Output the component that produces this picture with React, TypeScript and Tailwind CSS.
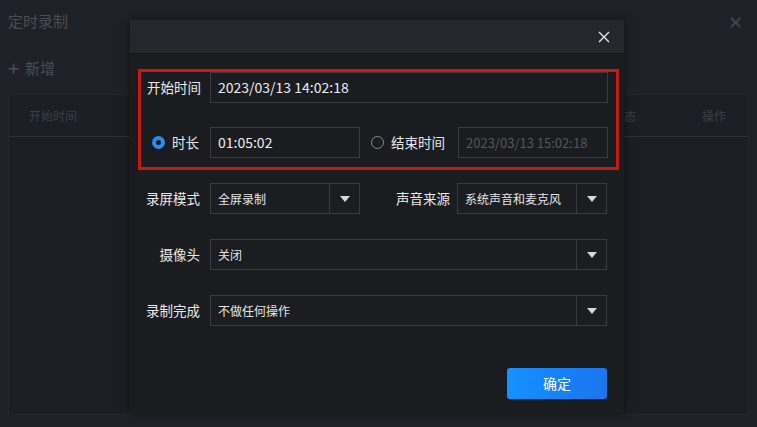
import React from 'react';

const font = { fontFamily: '"Noto Sans CJK SC", "Noto Sans", sans-serif' };

const Caret = () => (
  <svg width="10" height="6" viewBox="0 0 10 6">
    <path d="M0 0 L10 0 L5 6 Z" fill="#d8d8d8" />
  </svg>
);

const Select = ({ value, className }: { value: string; className: string }) => (
  <div className={`flex h-[31px] border border-[#3a3b41] bg-[#1c1d21] ${className}`}>
    <div className="flex flex-1 items-center pl-[7px] text-[12px] text-[#e4e4e4]">{value}</div>
    <div className="flex w-[30px] items-center justify-center border-l border-[#3a3b41]">
      <Caret />
    </div>
  </div>
);

const Radio = ({ on }: { on?: boolean }) =>
  on ? (
    <span className="flex h-[13px] w-[13px] items-center justify-center rounded-full bg-[#2d8cf0]">
      <span className="h-[5px] w-[5px] rounded-full bg-[#1b1c20]" />
    </span>
  ) : (
    <span className="h-[13px] w-[13px] rounded-full border border-[#8a8b90]" />
  );

const App = () => {
  return (
    <div className="relative h-[427px] w-[757px] overflow-hidden bg-[#1f2128]" style={font}>
      {/* background window */}
      <div className="flex h-[415px] flex-col px-[8px]">
        <div className="flex h-[42px] items-center justify-between">
          <span className="text-[15px] text-[#4b4d55]">定时录制</span>
          <span className="mr-[6px] text-[18px] text-[#44464e]">✕</span>
        </div>
        <div className="flex h-[52px] items-center gap-[6px] text-[15px] text-[#4b4d55]">
          <span className="text-[20px] leading-none">+</span>
          <span>新增</span>
        </div>
        <div className="flex-1 border border-[#25272e] bg-[#1c1e25]">
          <div className="flex h-[42px] items-center border-b border-[#2e3038] text-[12px] text-[#3c3e46]">
            <span className="ml-[20px]">开始时间</span>
            <span className="ml-auto mr-[66px]">状态</span>
            <span className="mr-[22px]">操作</span>
          </div>
        </div>
      </div>

      {/* dialog */}
      <div className="absolute left-[130px] top-[20px] flex h-[393px] w-[494px] flex-col bg-[#1b1c20] shadow-[0_0_8px_rgba(0,0,0,0.5)]">
        <div className="flex h-[34px] items-center justify-end border-b border-[#141518] bg-[#26272d] pr-[14px]">
          <svg width="12" height="12" viewBox="0 0 12 12">
            <path d="M1 1 L11 11 M11 1 L1 11" stroke="#e6e6e6" strokeWidth="1.4" />
          </svg>
        </div>

        <div className="flex flex-1 flex-col pl-[8px] pt-[15px]">
          <div className="mr-[5px] flex h-[101px] flex-col justify-between border-[3px] border-[#c01c14] pr-[8px]">
            <div className="flex items-center">
              <span className="w-[69px] pl-[6px] text-[13.5px] text-[#e8e8e8]">开始时间</span>
              <div className="flex h-[31px] flex-1 items-center border border-[#3a3b41] pl-[7px] text-[14px] text-[#ececec]">
                2023/03/13 14:02:18
              </div>
            </div>
            <div className="mb-[9px] flex items-center">
              <div className="flex w-[69px] items-center gap-[7px] pl-[11px]">
                <Radio on />
                <span className="text-[13.5px] text-[#e8e8e8]">时长</span>
              </div>
              <div className="flex h-[31px] w-[150px] items-center border border-[#3a3b41] pl-[7px] text-[14px] text-[#ececec]">
                01:05:02
              </div>
              <div className="ml-[11px] flex w-[87px] items-center gap-[7px]">
                <Radio />
                <span className="text-[13.5px] text-[#e8e8e8]">结束时间</span>
              </div>
              <div className="flex h-[31px] w-[150px] items-center border border-[#3a3b41] pl-[7px] text-[13px] text-[#55565b]">
                2023/03/13 15:02:18
              </div>
            </div>
          </div>

          <div className="mt-[13px] flex items-center pr-[17px]">
            <span className="w-[72px] pr-[10px] text-right text-[13.5px] text-[#e8e8e8]">录屏模式</span>
            <Select value="全屏录制" className="w-[150px]" />
            <span className="w-[97px] pr-[7px] text-right text-[13.5px] text-[#e8e8e8]">声音来源</span>
            <Select value="系统声音和麦克风" className="w-[150px]" />
          </div>
          <div className="mt-[25px] flex items-center pr-[17px]">
            <span className="w-[72px] pr-[10px] text-right text-[13.5px] text-[#e8e8e8]">摄像头</span>
            <Select value="关闭" className="flex-1" />
          </div>
          <div className="mt-[25px] flex items-center pr-[17px]">
            <span className="w-[72px] pr-[10px] text-right text-[13.5px] text-[#e8e8e8]">录制完成</span>
            <Select value="不做任何操作" className="flex-1" />
          </div>

          <div className="mt-[42px] flex justify-end pr-[17px]">
            <button className="h-[31px] w-[100px] rounded-[3px] bg-gradient-to-r from-[#1591ff] to-[#1a74f0] text-[14px] text-white">
              确定
            </button>
          </div>
        </div>
      </div>
    </div>
  );
};

export default App;
